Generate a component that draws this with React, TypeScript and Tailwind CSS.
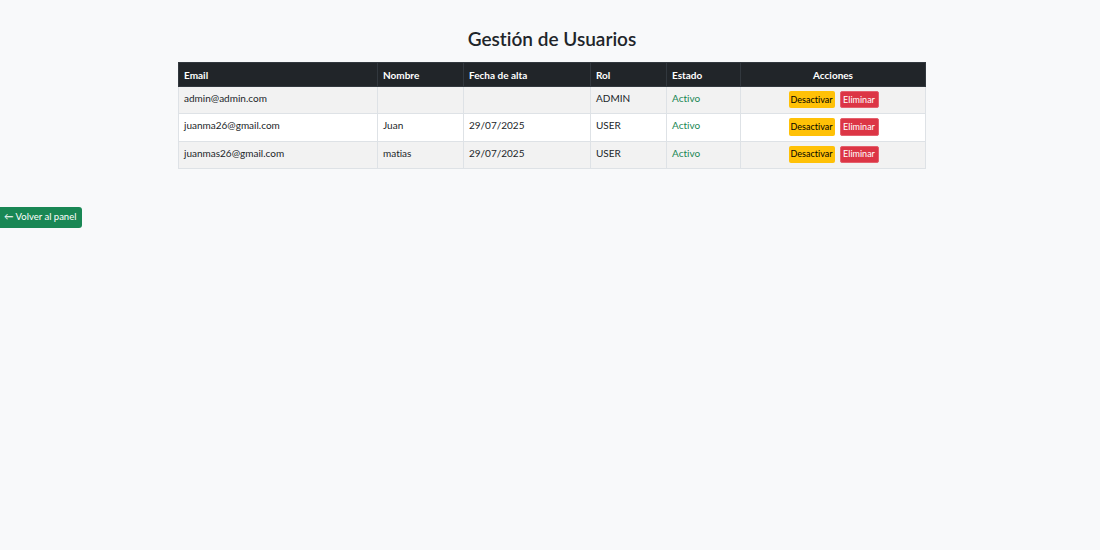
const users = [
  { email: 'admin@admin.com', nombre: '', fecha: '', rol: 'ADMIN', estado: 'Activo' },
  { email: 'juanma26@gmail.com', nombre: 'Juan', fecha: '29/07/2025', rol: 'USER', estado: 'Activo' },
  { email: 'juanmas26@gmail.com', nombre: 'matias', fecha: '29/07/2025', rol: 'USER', estado: 'Activo' },
];

export default function App() {
  return (
    <div className="min-h-screen w-full bg-[#f8f9fa] text-[#212529] font-['Lato',_'Liberation_Sans',_sans-serif] [font-variant-ligatures:none]">
      <div className="pt-[25px] ml-[178px] w-[748px]">
        <h1 className="text-center text-[19px] leading-[28px] font-semibold mb-[9px]">Gestión de Usuarios</h1>

        <table className="w-[748px] border-collapse text-[10px] leading-[14px]">
          <thead>
            <tr className="bg-[#212529] text-white">
              <th className="w-[199px] h-[24px] px-[5px] text-left font-bold border border-[#32383e]">Email</th>
              <th className="w-[86px] px-[5px] text-left font-bold border border-[#32383e]">Nombre</th>
              <th className="w-[127px] px-[5px] text-left font-bold border border-[#32383e]">Fecha de alta</th>
              <th className="w-[76px] px-[5px] text-left font-bold border border-[#32383e]">Rol</th>
              <th className="w-[74px] px-[5px] text-left font-bold border border-[#32383e]">Estado</th>
              <th className="px-[5px] text-center font-bold border border-[#32383e]">Acciones</th>
            </tr>
          </thead>
          <tbody>
            {users.map((u, i) => (
              <tr key={u.email} className={i % 2 === 0 ? 'bg-[#f2f2f2]' : 'bg-white'}>
                <td className="px-[5px] pt-[4px] pb-[5px] align-top border border-[#dee2e6]">{u.email}</td>
                <td className="px-[5px] pt-[4px] pb-[5px] align-top border border-[#dee2e6]">{u.nombre}</td>
                <td className="px-[5px] pt-[4px] pb-[5px] align-top border border-[#dee2e6]">{u.fecha}</td>
                <td className="px-[5px] pt-[4px] pb-[5px] align-top border border-[#dee2e6]">{u.rol}</td>
                <td className="px-[5px] pt-[4px] pb-[5px] align-top border border-[#dee2e6] text-[#198754]">{u.estado}</td>
                <td className="px-[5px] pt-[4px] pb-[5px] align-top border border-[#dee2e6]">
                  <div className="flex justify-center gap-[5px] pl-[1px]">
                    <button className="h-[17.3px] w-[46px] rounded-[2px] bg-[#ffc107] text-[9px] text-black">Desactivar</button>
                    <button className="h-[17.3px] w-[39px] rounded-[2px] border border-[#e4606d] bg-[#dc3545] text-[9px] text-white">Eliminar</button>
                  </div>
                </td>
              </tr>
            ))}
          </tbody>
        </table>
      </div>

      <button className="block mt-[38px] h-[21px] w-[82px] rounded-r-[3px] bg-[#198754] text-white text-[9.5px] pl-[4px] text-left whitespace-nowrap">
        ← Volver al panel
      </button>
    </div>
  );
}
